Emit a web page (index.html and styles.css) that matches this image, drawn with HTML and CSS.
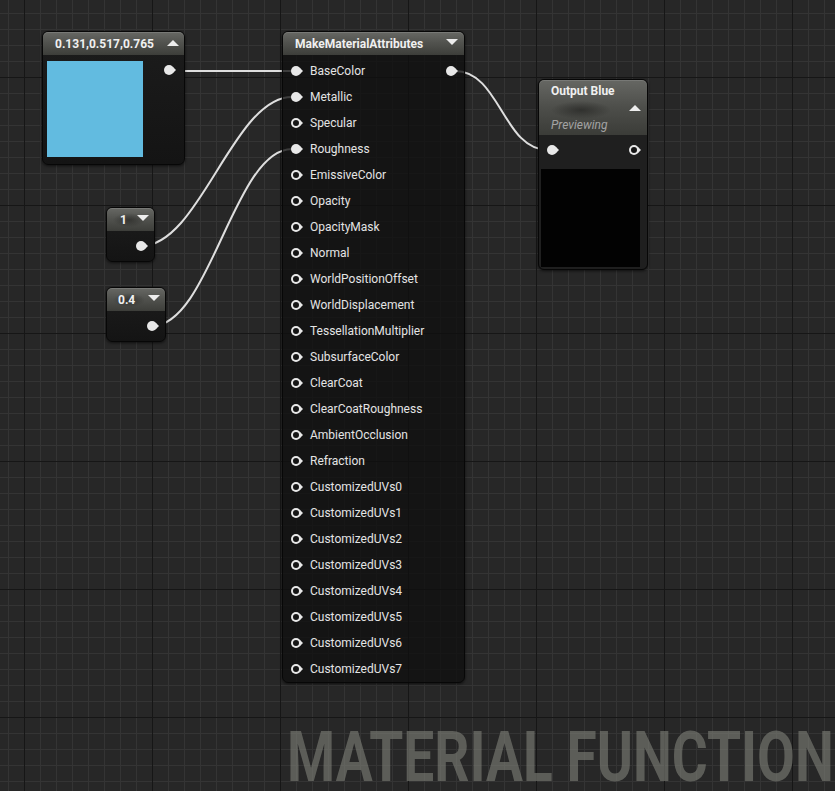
FILE: index.html
```html
<!DOCTYPE html>
<html>
<head>
<meta charset="utf-8">
<link rel="stylesheet" href="styles.css">
</head>
<body>
<div class="graph">
  <svg class="wires" width="835" height="791" viewBox="0 0 835 791">
    <path d="M172 71 L292 71" />
    <path d="M455 71 C500 71 503 150 548 150" />
    <path d="M141 246 C200 246 233 97 292 97" />
    <path d="M152 326 C210 326 234 149 292 149" />
  </svg>

  <div class="node vec3">
    <div class="header">
      <span class="title">0.131,0.517,0.765</span>
      <span class="tri up"></span>
    </div>
    <div class="vec3-body">
      <div class="swatch"></div>
      <span class="pin"></span>
    </div>
  </div>

  <div class="node const const-1">
    <div class="header">
      <span class="title val">1</span>
      <span class="tri down"></span>
    </div>
    <div class="const-body"><span class="pin"></span></div>
  </div>

  <div class="node const const-04">
    <div class="header">
      <span class="title val">0.4</span>
      <span class="tri down"></span>
    </div>
    <div class="const-body"><span class="pin"></span></div>
  </div>

  <div class="node mma">
    <div class="header">
      <span class="title">MakeMaterialAttributes</span>
      <span class="tri down"></span>
    </div>
    <div class="mma-body">
      <div class="row"><span class="pin"></span><span class="label">BaseColor</span><span class="pin out"></span></div>
      <div class="row"><span class="pin"></span><span class="label">Metallic</span></div>
      <div class="row"><span class="pin hollow"></span><span class="label">Specular</span></div>
      <div class="row"><span class="pin"></span><span class="label">Roughness</span></div>
      <div class="row"><span class="pin hollow"></span><span class="label">EmissiveColor</span></div>
      <div class="row"><span class="pin hollow"></span><span class="label">Opacity</span></div>
      <div class="row"><span class="pin hollow"></span><span class="label">OpacityMask</span></div>
      <div class="row"><span class="pin hollow"></span><span class="label">Normal</span></div>
      <div class="row"><span class="pin hollow"></span><span class="label">WorldPositionOffset</span></div>
      <div class="row"><span class="pin hollow"></span><span class="label">WorldDisplacement</span></div>
      <div class="row"><span class="pin hollow"></span><span class="label">TessellationMultiplier</span></div>
      <div class="row"><span class="pin hollow"></span><span class="label">SubsurfaceColor</span></div>
      <div class="row"><span class="pin hollow"></span><span class="label">ClearCoat</span></div>
      <div class="row"><span class="pin hollow"></span><span class="label">ClearCoatRoughness</span></div>
      <div class="row"><span class="pin hollow"></span><span class="label">AmbientOcclusion</span></div>
      <div class="row"><span class="pin hollow"></span><span class="label">Refraction</span></div>
      <div class="row"><span class="pin hollow"></span><span class="label">CustomizedUVs0</span></div>
      <div class="row"><span class="pin hollow"></span><span class="label">CustomizedUVs1</span></div>
      <div class="row"><span class="pin hollow"></span><span class="label">CustomizedUVs2</span></div>
      <div class="row"><span class="pin hollow"></span><span class="label">CustomizedUVs3</span></div>
      <div class="row"><span class="pin hollow"></span><span class="label">CustomizedUVs4</span></div>
      <div class="row"><span class="pin hollow"></span><span class="label">CustomizedUVs5</span></div>
      <div class="row"><span class="pin hollow"></span><span class="label">CustomizedUVs6</span></div>
      <div class="row"><span class="pin hollow"></span><span class="label">CustomizedUVs7</span></div>
    </div>
  </div>

  <div class="node output">
    <div class="out-header">
      <div class="title">Output Blue</div>
      <div class="tri-row"><span class="tri up"></span></div>
      <div class="subtitle">Previewing</div>
    </div>
    <div class="out-pins">
      <span class="pin"></span>
      <span class="pin hollow"></span>
    </div>
    <div class="preview"></div>
  </div>

  <div class="watermark-box"><span class="watermark">MATERIAL FUNCTION</span></div>
</div>
</body>
</html>
```

FILE: styles.css
```css
* { box-sizing: border-box; }

body {
  margin: 0;
  width: 835px;
  height: 791px;
  overflow: hidden;
  background: #262626;
}

.graph {
  position: relative;
  width: 835px;
  height: 791px;
  overflow: hidden;
  font-family: Roboto, "Liberation Sans", sans-serif;
  color: #e6e6e6;
  background-color: #272727;
  background-image:
    linear-gradient(to right, #161616 1px, transparent 1px),
    linear-gradient(to bottom, #161616 1px, transparent 1px),
    linear-gradient(to right, #343434 1px, transparent 1px),
    linear-gradient(to bottom, #343434 1px, transparent 1px);
  background-size: 128px 128px, 128px 128px, 16px 16px, 16px 16px;
  background-position: 24px 0, 0 77px, 8px 0, 0 13px;
}

.wires {
  position: absolute;
  left: 0;
  top: 0;
}
.wires path {
  fill: none;
  stroke: #dedede;
  stroke-width: 2;
}

/* ---------- nodes ---------- */
.node {
  position: absolute;
  border: 1px solid #070707;
  border-radius: 6px;
  background: rgba(16, 16, 16, 0.78);
  box-shadow: 0 1px 3px rgba(0, 0, 0, 0.6);
}

.header {
  height: 23px;
  display: flex;
  align-items: center;
  justify-content: space-between;
  border-radius: 5px 5px 0 0;
  background: linear-gradient(#676864 0%, #52534f 45%, #3d3e3a 100%);
  box-shadow: inset 0 1px 0 rgba(255, 255, 255, 0.12);
}

.title {
  font-weight: bold;
  font-size: 12px;
  color: #f0f0f0;
  white-space: nowrap;
}

.tri {
  width: 0;
  height: 0;
  border-left: 6px solid transparent;
  border-right: 6px solid transparent;
  flex: none;
}
.tri.up { border-bottom: 6px solid #ededed; }
.tri.down { border-top: 6px solid #ededed; }

/* pins */
.pin {
  position: relative;
  flex: none;
  width: 10px;
  height: 10px;
  border-radius: 50%;
  background: #e8e8e8;
  margin-right: 3px;
}
.pin::after {
  content: "";
  position: absolute;
  left: 9px;
  top: 2px;
  border-left: 3px solid #e8e8e8;
  border-top: 3px solid transparent;
  border-bottom: 3px solid transparent;
}
.pin.hollow {
  background: #141414;
  box-shadow: inset 0 0 0 2px #e8e8e8;
}

/* constant vector node */
.vec3 {
  left: 42px;
  top: 31px;
  width: 143px;
  height: 134px;
  background: linear-gradient(#1c1c1c, #141414);
}
.vec3 .header {
  padding: 0 5px 0 12px;
}
.vec3 .tri { margin-top: -2px; }
.vec3-body {
  display: flex;
  align-items: flex-start;
  padding: 6px 7px 0 4px;
}
.swatch {
  width: 96px;
  height: 96px;
  background: #62bbe0;
}
.vec3-body .pin {
  margin-left: auto;
  margin-top: 4px;
}

/* scalar constants */
.const {
  left: 106px;
  width: 49px;
  height: 55px;
  background: linear-gradient(#1d1d1d, #141414);
}
.const-1 { top: 207px; }
.const-04 { top: 287px; width: 60px; }
.const .header {
  padding: 0 5px 0 13px;
  background:
    radial-gradient(ellipse 16px 7px at 22px 12px, rgba(30, 30, 28, 0.55), transparent),
    linear-gradient(#676864 0%, #52534f 45%, #3d3e3a 100%);
}
.const-04 .header { padding-left: 11px; }
.const .tri { margin-top: -3px; }
.const-body {
  height: 30px;
  display: flex;
  align-items: center;
  justify-content: flex-end;
  padding-right: 5px;
}

/* MakeMaterialAttributes */
.mma {
  left: 282px;
  top: 31px;
  width: 183px;
  height: 652px;
}
.mma .header {
  padding: 0 6px 0 12px;
}
.mma .tri { margin-top: -4px; }
.mma-body {
  padding-top: 3px;
}
.row {
  height: 26px;
  display: flex;
  align-items: center;
  padding: 0 5px 0 8px;
}
.label {
  font-size: 12px;
  margin-left: 6px;
  color: #e4e4e4;
  white-space: nowrap;
}
.pin.out { margin-left: auto; }

/* Output node */
.output {
  left: 538px;
  top: 79px;
  width: 110px;
  height: 191px;
  background: #1f1f1f;
}
.out-header {
  height: 55px;
  padding: 3px 6px 0 12px;
  border-radius: 5px 5px 0 0;
  background:
    radial-gradient(ellipse 30px 9px at 42px 30px, rgba(30, 30, 28, 0.6), transparent),
    linear-gradient(#666763 0%, #4d4e4a 50%, #3b3c38 100%);
  box-shadow: inset 0 1px 0 rgba(255, 255, 255, 0.12);
}
.out-header .title {
  line-height: 16px;
}
.tri-row {
  display: flex;
  justify-content: flex-end;
  height: 18px;
  padding-top: 6px;
}
.subtitle {
  font-style: italic;
  font-size: 12px;
  line-height: 16px;
  color: #a3a3a3;
}
.out-pins {
  height: 30px;
  display: flex;
  align-items: center;
  justify-content: space-between;
  padding: 0 5px 0 8px;
}
.preview {
  margin: 4px 0 0 2px;
  width: 99px;
  height: 98px;
  background: #020202;
}

/* watermark */
.watermark-box {
  position: absolute;
  left: 287px;
  top: 728px;
  width: 545px;
  height: 59px;
}
.watermark {
  display: inline-block;
  font-family: Roboto, "Liberation Sans", sans-serif;
  font-weight: bold;
  font-size: 55px;
  line-height: 46px;
  white-space: nowrap;
  color: rgba(126, 127, 119, 0.62);
  transform: scaleY(1.2727);
  transform-origin: 0 0;
}
```
